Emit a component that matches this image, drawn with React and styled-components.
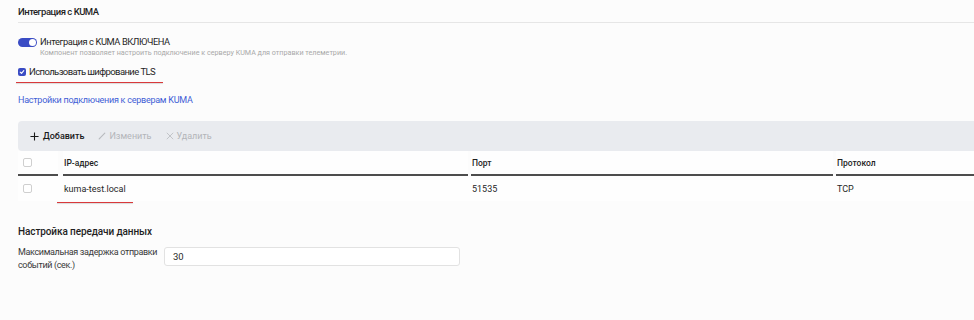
import React from "react";
import styled, { createGlobalStyle } from "styled-components";

const Global = createGlobalStyle`
  html, body { margin: 0; padding: 0; background: #fcfcfc; overflow: hidden; }
  body { font-family: Roboto, "Noto Sans", sans-serif; color: #1f1f1f; }
`;

const Page = styled.div`
  padding-left: 18px;
  position: relative;
  height: 320px;
`;

const Title = styled.div`
  font-size: 9.5px;
  font-weight: 500;
  letter-spacing: -0.5px;
  line-height: 14px;
  padding: 5px 0 3px;
  border-bottom: 1px solid #e6e6e6;
`;

const ToggleRow = styled.div`
  display: flex;
  align-items: center;
  gap: 3px;
  margin-top: 13px;
  height: 12px;
  font-size: 9.3px;
  letter-spacing: -0.4px;
  line-height: 12px;
`;

const Toggle = styled.span`
  width: 19px;
  height: 9px;
  border-radius: 5px;
  background: #3a4cc4;
  position: relative;
  flex: none;
  &::after {
    content: "";
    position: absolute;
    right: 1px;
    top: 1px;
    width: 7px;
    height: 7px;
    border-radius: 50%;
    background: #fff;
  }
`;

const Description = styled.div`
  padding-left: 22px;
  font-size: 7.2px;
  line-height: 10px;
  color: #a9a9a9;
`;

const CheckRow = styled.div`
  display: flex;
  align-items: center;
  gap: 3px;
  margin-top: 8px;
  height: 12px;
  font-size: 9.5px;
  letter-spacing: -0.6px;
  line-height: 12px;
`;

const CheckBox = styled.span`
  width: ${(p) => p.$size}px;
  height: ${(p) => p.$size}px;
  border-radius: 2px;
  box-sizing: border-box;
  flex: none;
  display: flex;
  align-items: center;
  justify-content: center;
  background: ${(p) => (p.$checked ? "#3a4cc4" : "#fff")};
  border: ${(p) => (p.$checked ? "none" : "1px solid #cfcfcf")};
`;

const Link = styled.div`
  margin-top: 16px;
  height: 12px;
  line-height: 12px;
  font-size: 9px;
  letter-spacing: -0.25px;
  color: #3f5ed6;
`;

const Toolbar = styled.div`
  margin-top: 15px;
  height: 30px;
  background: #e9ebef;
  border-radius: 4px 0 0 4px;
  display: flex;
  align-items: center;
  padding-left: 12px;
  gap: 14px;
`;

const ToolButton = styled.span`
  display: flex;
  align-items: center;
  gap: ${(p) => (p.$disabled ? 3 : 4)}px;
  font-size: 9px;
  font-weight: ${(p) => (p.$disabled ? 400 : 500)};
  color: ${(p) => (p.$disabled ? "#b3b5b9" : "#1a1a1a")};
`;

const Table = styled.div`
  display: grid;
  grid-template-columns: 45px 408px 365px 1fr;
`;

const HeadCell = styled.div`
  height: 23px;
  border-bottom: 2px solid #4d4d4d;
  margin-right: ${(p) => (p.$first ? 5 : p.$last ? 0 : 3)}px;
  display: flex;
  align-items: center;
  padding-left: ${(p) => (p.$first ? 5 : 1)}px;
  font-size: 8.5px;
  font-weight: 500;
  background: #fefefe;
`;

const Cell = styled.div`
  height: 25px;
  display: flex;
  align-items: center;
  padding-left: ${(p) => (p.$first ? 5 : 1)}px;
  font-size: 9px;
  background: #fefefe;
  color: #262626;
`;

const Heading = styled.div`
  margin-top: 24px;
  font-size: 10px;
  font-weight: 500;
  letter-spacing: -0.1px;
  line-height: 14px;
`;

const FieldRow = styled.div`
  display: flex;
  align-items: flex-start;
  margin-top: 8px;
`;

const FieldLabel = styled.div`
  width: 146px;
  font-size: 9px;
  letter-spacing: -0.35px;
  line-height: 13px;
  color: #3a3a3a;
  margin-top: -1.5px;
  white-space: nowrap;
`;

const Input = styled.div`
  width: 296px;
  height: 19px;
  box-sizing: border-box;
  border: 1px solid #e2e2e2;
  border-radius: 3px;
  background: #fff;
  padding-left: 8px;
  display: flex;
  align-items: center;
  font-size: 9.5px;
  color: #2a2a2a;
`;

const Mark = styled.div`
  position: absolute;
  height: 1px;
  background: #d9393b;
  box-shadow: 0 1px 1px rgba(0,0,0,0.15);
`;

const Check = () => (
  <svg width="6" height="6" viewBox="0 0 10 10">
    <path d="M2 5.2 L4.2 7.3 L8 2.8" fill="none" stroke="#fff" strokeWidth="1.8" strokeLinecap="round" strokeLinejoin="round" />
  </svg>
);

const Plus = () => (
  <svg width="9" height="9" viewBox="0 0 10 10">
    <path d="M5 0.5 V9.5 M0.5 5 H9.5" stroke="#1a1a1a" strokeWidth="1.2" />
  </svg>
);

const Pen = () => (
  <svg width="8" height="8" viewBox="0 0 10 10">
    <path d="M1.5 8.5 L8.5 1.5" stroke="#b8babe" strokeWidth="1.4" strokeLinecap="round" />
    <path d="M1 9 L1.8 7.2 L2.8 8.2 Z" fill="#b8babe" />
  </svg>
);

const Cross = () => (
  <svg width="8" height="8" viewBox="0 0 10 10">
    <path d="M1 1 L9 9 M9 1 L1 9" stroke="#b8babe" strokeWidth="1" />
  </svg>
);

export default function App() {
  return (
    <>
      <Global />
      <Page>
        <Title>Интеграция с KUMA</Title>
        <ToggleRow>
          <Toggle />
          Интеграция с KUMA ВКЛЮЧЕНА
        </ToggleRow>
        <Description>
          Компонент позволяет настроить подключение к серверу KUMA для отправки телеметрии.
        </Description>
        <CheckRow>
          <CheckBox $size={8} $checked>
            <Check />
          </CheckBox>
          Использовать шифрование TLS
        </CheckRow>
        <Link>Настройки подключения к серверам KUMA</Link>
        <Toolbar>
          <ToolButton>
            <Plus />
            Добавить
          </ToolButton>
          <ToolButton $disabled>
            <Pen />
            Изменить
          </ToolButton>
          <ToolButton $disabled>
            <Cross />
            Удалить
          </ToolButton>
        </Toolbar>
        <Table>
          <HeadCell $first>
            <CheckBox $size={9} />
          </HeadCell>
          <HeadCell>IP-адрес</HeadCell>
          <HeadCell>Порт</HeadCell>
          <HeadCell $last>Протокол</HeadCell>
          <Cell $first>
            <CheckBox $size={9} />
          </Cell>
          <Cell>kuma-test.local</Cell>
          <Cell>51535</Cell>
          <Cell>TCP</Cell>
        </Table>
        <Heading>Настройка передачи данных</Heading>
        <FieldRow>
          <FieldLabel>
            Максимальная задержка отправки
            <br />
            событий (сек.)
          </FieldLabel>
          <Input>30</Input>
        </FieldRow>
        <Mark style={{ left: 16, top: 82, width: 147 }} />
        <Mark style={{ left: 57, top: 202, width: 76 }} />
      </Page>
    </>
  );
}
